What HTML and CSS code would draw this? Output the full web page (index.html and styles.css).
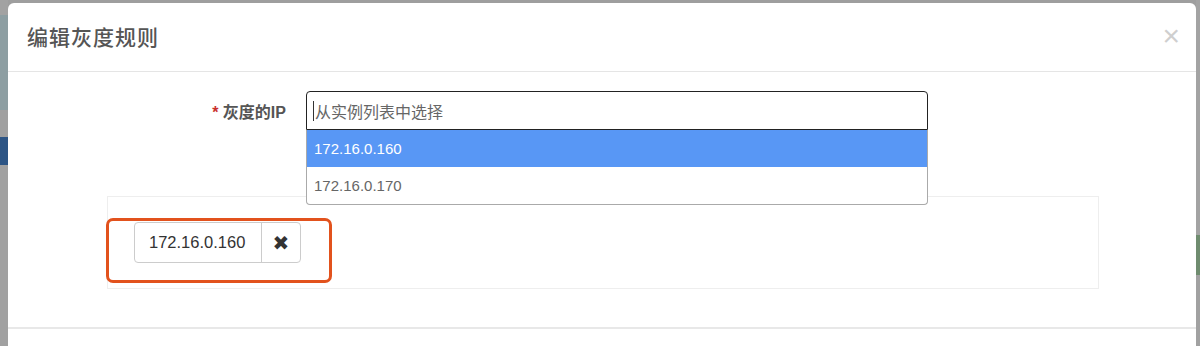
FILE: index.html
```html
<!DOCTYPE html>
<html lang="zh-CN">
<head>
<meta charset="utf-8">
<title>编辑灰度规则</title>
<link rel="stylesheet" href="styles.css">
</head>
<body>
<div class="screen">
  <div class="edge edge-left">
    <div class="blk blk-grey1"></div>
    <div class="blk blk-teal"></div>
    <div class="blk blk-grey2"></div>
    <div class="blk blk-blue"></div>
    <div class="blk blk-rest"></div>
  </div>
  <div class="modal">
    <div class="modal-header">
      <h4 class="modal-title">编辑灰度规则</h4>
      <span class="close">×</span>
    </div>
    <div class="modal-body">
      <div class="form-row">
        <label class="control-label"><span class="req">*</span> 灰度的IP</label>
        <div class="select-wrap">
          <div class="select-input"><span class="caret-bar"></span><span class="placeholder">从实例列表中选择</span></div>
          <ul class="dropdown">
            <li class="opt active">172.16.0.160</li>
            <li class="opt">172.16.0.170</li>
          </ul>
        </div>
      </div>
      <div class="panel">
        <div class="highlight">
          <div class="tag">
            <span class="tag-text">172.16.0.160</span>
            <span class="tag-btn">✖</span>
          </div>
        </div>
      </div>
    </div>
    <div class="modal-footer"></div>
  </div>
  <div class="edge edge-right">
    <div class="blk blk-r1"></div>
    <div class="blk blk-green"></div>
    <div class="blk blk-rest"></div>
  </div>
</div>
</body>
</html>
```
FILE: styles.css
```css
* { box-sizing: border-box; }
html, body { margin: 0; padding: 0; }
body {
  width: 1200px;
  height: 346px;
  overflow: hidden;
  background: #9e9e9e;
  font-family: "Liberation Sans", "Noto Sans CJK SC", sans-serif;
}
.screen {
  display: flex;
  height: 346px;
}
.edge {
  display: flex;
  flex-direction: column;
  flex: none;
}
.edge-left { width: 8px; }
.edge-right { width: 4px; }
.blk-grey1 { height: 15px; background: #a2a2a2; }
.blk-teal { height: 95px; background: #8d9ea2; }
.blk-grey2 { height: 27px; background: #a0a0a0; }
.blk-blue { height: 28px; background: #2d5585; }
.blk-rest { flex: 1; background: #a1a1a1; }
.blk-r1 { height: 235px; background: #a3a3a3; }
.blk-green { height: 40px; background: #6f8c6f; }

.modal {
  flex: 1;
  margin-top: 3px;
  background: #fff;
  border-radius: 6px 6px 0 0;
  display: flex;
  flex-direction: column;
}
.modal-header {
  height: 69px;
  border-bottom: 1px solid #e5e5e5;
  display: flex;
  align-items: center;
  justify-content: space-between;
  padding: 0 16px 0 19px;
}
.modal-title {
  margin: 0;
  font-family: "Noto Sans CJK SC", sans-serif;
  font-size: 21px;
  font-weight: 500;
  color: #555;
  letter-spacing: 1px;
  padding-bottom: 2px;
}
.close {
  font-family: "Liberation Sans", sans-serif;
  font-size: 30px;
  font-weight: 400;
  color: #cfcfcf;
  line-height: 1;
  padding-bottom: 2px;
}
.modal-body {
  padding: 19px 0 38px 99px;
}
.form-row {
  display: flex;
  align-items: flex-start;
}
.control-label {
  width: 199px;
  text-align: right;
  padding-right: 20px;
  padding-top: 8px;
  font-family: "Liberation Sans", "Noto Sans CJK SC", sans-serif;
  font-size: 16px;
  font-weight: 700;
  color: #555;
}
.req { color: #c9302c; }
.select-wrap {
  position: relative;
  width: 622px;
}
.select-input {
  height: 39px;
  border: 1px solid #222;
  border-radius: 4px 4px 0 0;
  display: flex;
  align-items: center;
  padding-left: 6px;
}
.caret-bar {
  width: 1px;
  height: 20px;
  background: #333;
  margin-right: 1px;
}
.placeholder {
  font-family: "Noto Sans CJK SC", sans-serif;
  font-size: 16px;
  color: #666;
}
.dropdown {
  position: absolute;
  left: 0;
  right: 0;
  top: 39px;
  margin: 0;
  padding: 0;
  list-style: none;
  background: #fff;
  border: 1px solid #aaa;
  border-top: none;
  border-radius: 0 0 4px 4px;
  z-index: 2;
}
.opt {
  height: 37px;
  display: flex;
  align-items: center;
  padding-left: 7px;
  font-size: 15px;
  color: #666;
}
.opt.active {
  background: #5897f5;
  color: #fff;
}
.panel {
  margin-top: 66px;
  width: 992px;
  height: 93px;
  border: 1px solid #eeeeee;
  padding-top: 21px;
}
.highlight {
  margin-left: -2px;
  width: 226px;
  height: 65px;
  border: 3px solid #e2521d;
  border-radius: 7px;
  padding: 1px 0 0 25px;
}
.tag {
  display: inline-flex;
  height: 41px;
  border: 1px solid #ccc;
  border-radius: 4px;
}
.tag-text {
  display: flex;
  align-items: center;
  width: 127px;
  padding-left: 14px;
  font-size: 16.5px;
  color: #333;
  border-right: 1px solid #ccc;
}
.tag-btn {
  display: flex;
  align-items: center;
  justify-content: center;
  width: 38px;
  font-family: "DejaVu Sans", sans-serif;
  font-size: 20px;
  color: #333;
}
.modal-footer {
  flex: 1;
  border-top: 2px solid #e8e8e8;
}
```
